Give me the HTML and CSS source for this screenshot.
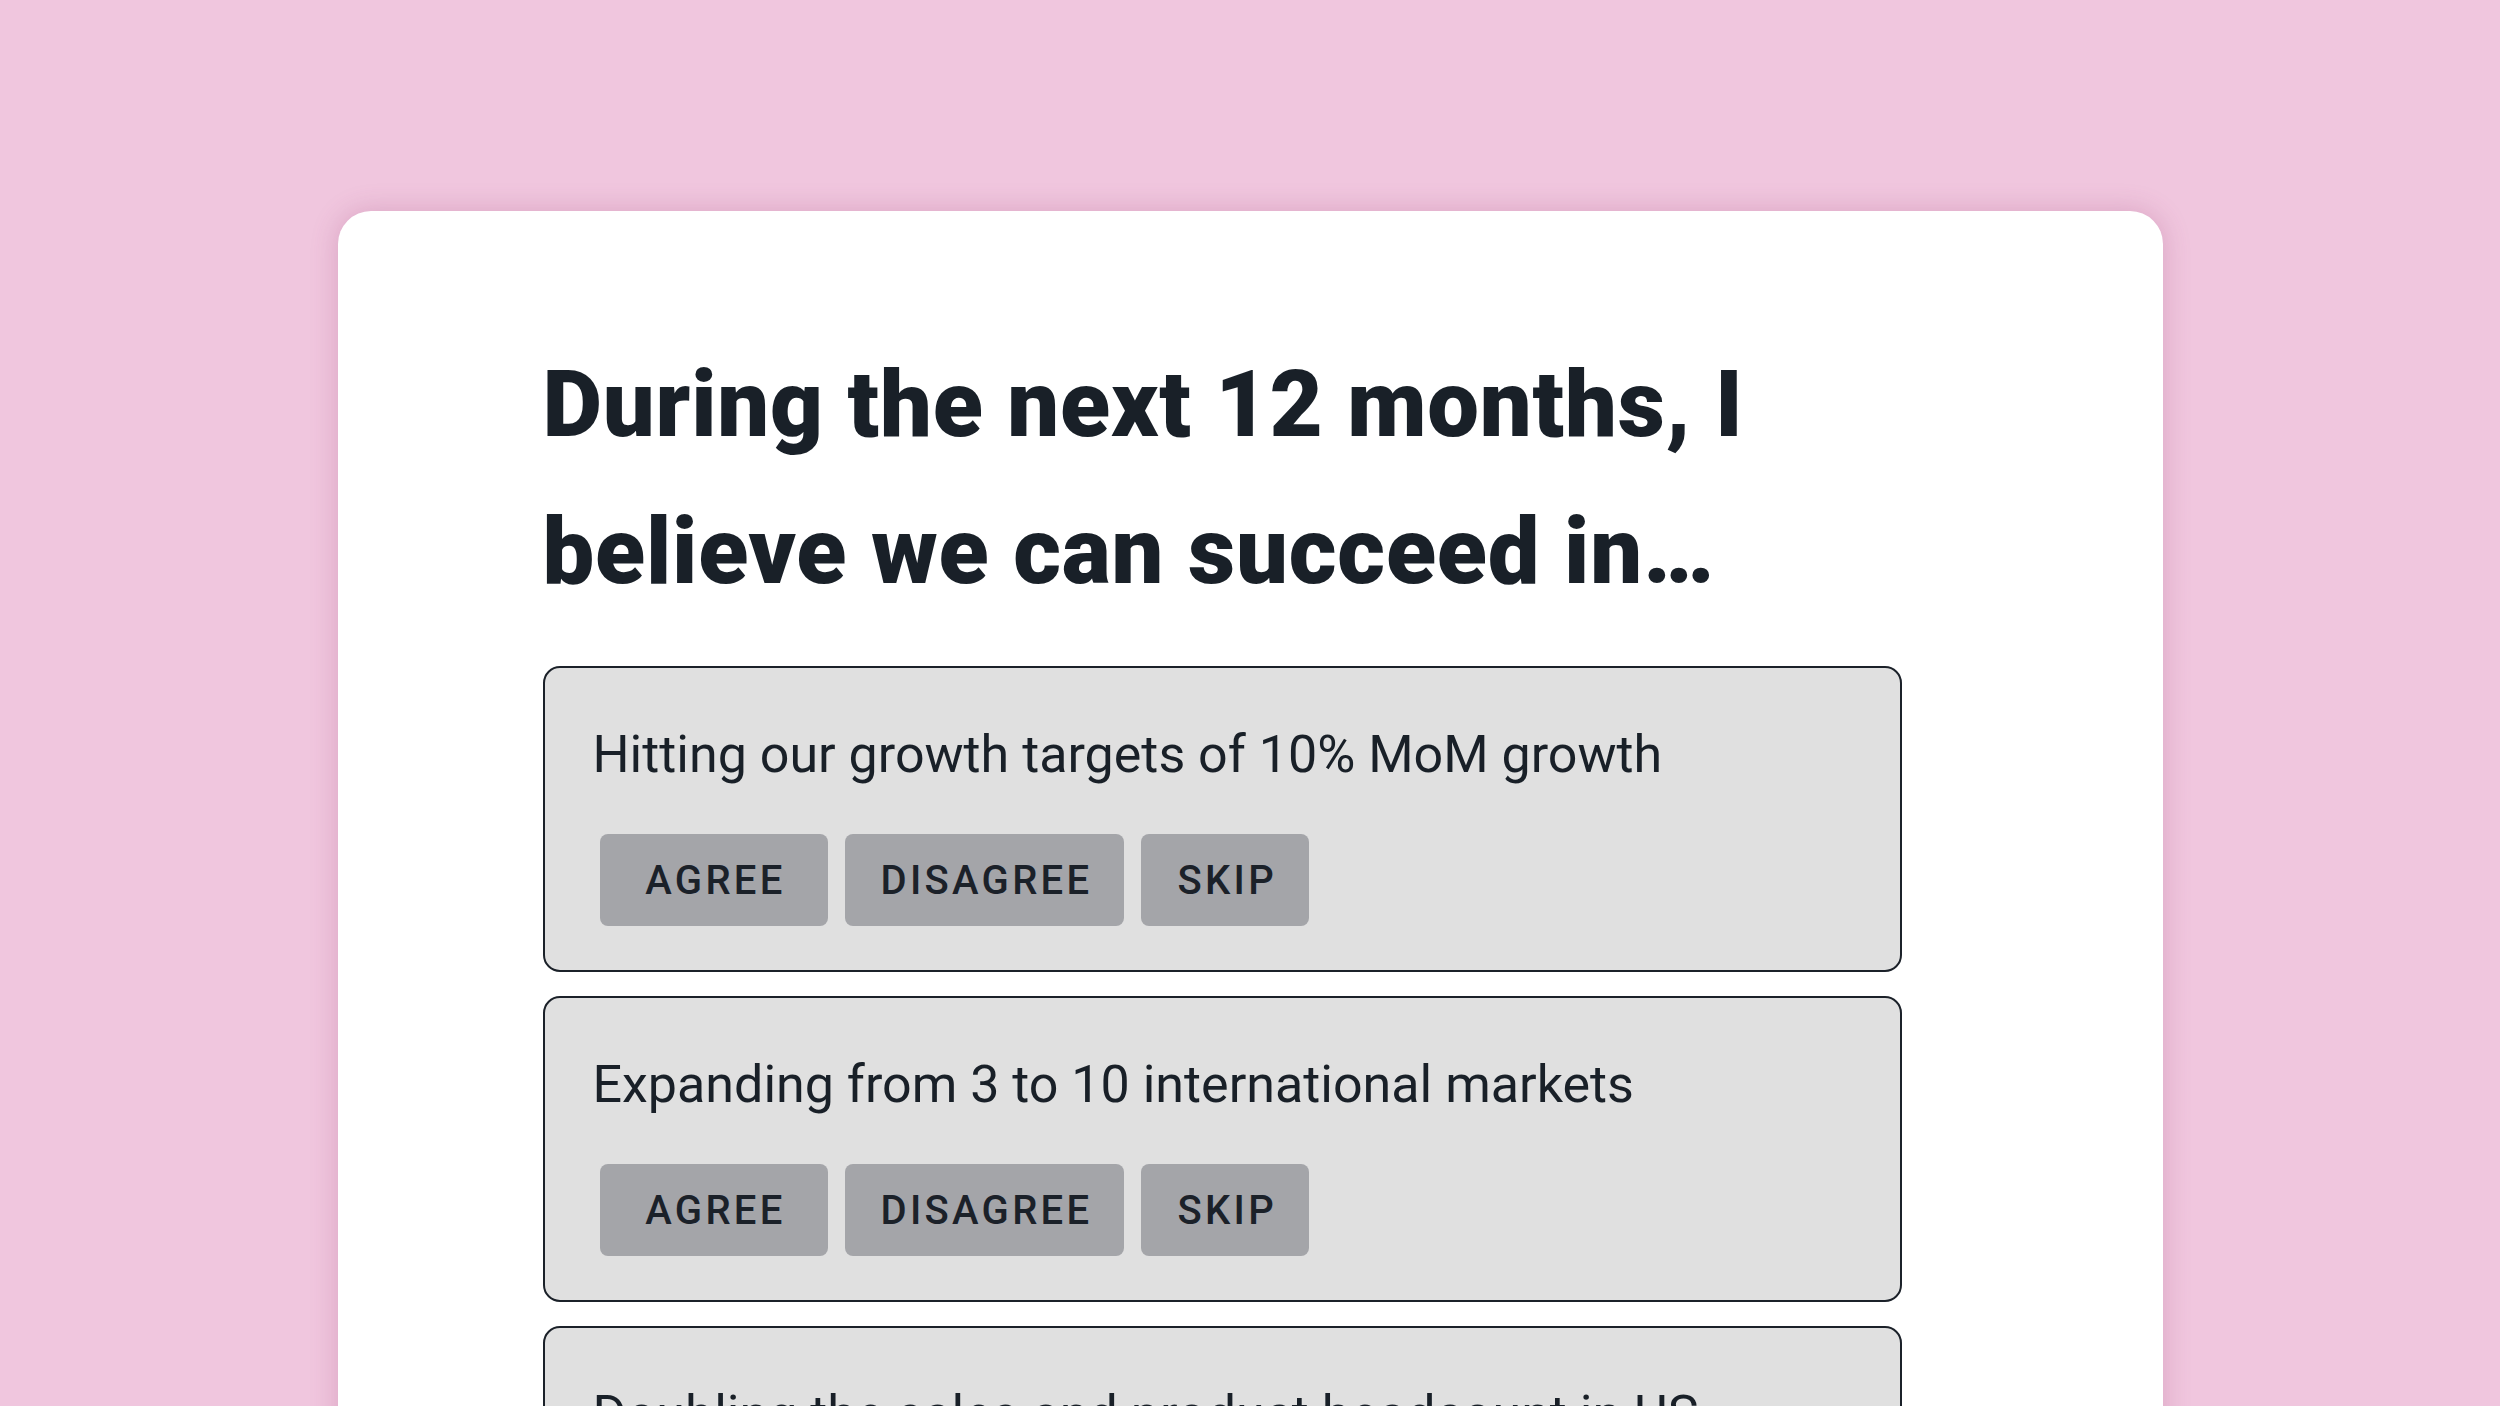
FILE: index.html
```html
<!DOCTYPE html>
<html lang="en">
<head>
<meta charset="utf-8">
<title>Survey</title>
<link rel="stylesheet" href="styles.css">
</head>
<body>
<div class="page">
  <main class="card">
    <div class="content">
      <h1 class="title">During the next 12 months, I believe we can succeed in…</h1>
      <div class="options">
        <section class="option">
          <p class="option-text">Hitting our growth targets of 10% MoM growth</p>
          <div class="actions">
            <button class="btn btn-agree">Agree</button>
            <button class="btn">Disagree</button>
            <button class="btn">Skip</button>
          </div>
        </section>
        <section class="option">
          <p class="option-text">Expanding from 3 to 10 international markets</p>
          <div class="actions">
            <button class="btn btn-agree">Agree</button>
            <button class="btn">Disagree</button>
            <button class="btn">Skip</button>
          </div>
        </section>
        <section class="option">
          <p class="option-text">Doubling the sales and product headcount in US</p>
          <div class="actions">
            <button class="btn btn-agree">Agree</button>
            <button class="btn">Disagree</button>
            <button class="btn">Skip</button>
          </div>
        </section>
      </div>
    </div>
  </main>
</div>
</body>
</html>
```
FILE: styles.css
```css
html, body {
  margin: 0;
  padding: 0;
  height: 100%;
}
body {
  background: #f0c6de;
  font-family: Roboto, "Liberation Sans", sans-serif;
  color: #192028;
  overflow: hidden;
}
.page {
  padding-top: 211px;
  display: flex;
  justify-content: center;
}
.card {
  width: 1825px;
  min-height: 1400px;
  background: #ffffff;
  border-radius: 33px;
  box-shadow: 0 0 26px 2px rgba(150, 60, 110, 0.22);
  box-sizing: border-box;
  padding: 120px 0 0 205px;
}
.content {
  width: 1359px;
}
.title {
  margin: 0 0 41px 0;
  font-size: 92px;
  font-weight: 900;
  line-height: 147px;
  color: #192028;
  letter-spacing: 0.8px;
}
.options {
  display: flex;
  flex-direction: column;
  gap: 24px;
}
.option {
  background: #e0e0e0;
  border: 2px solid #1b2129;
  border-radius: 17px;
  padding: 48px 48px 44px 48px;
}
.option-text {
  margin: 0 0 40px 0;
  font-size: 52px;
  line-height: 78px;
  font-weight: 400;
  color: #192028;
}
.actions {
  display: flex;
  gap: 17px;
  margin-left: 7px;
}
.btn {
  height: 92px;
  padding: 0 32px 0 36px;
  border: none;
  border-radius: 8px;
  background: #a4a5a9;
  color: #1b2129;
  font-family: Roboto, "Liberation Sans", sans-serif;
  font-size: 40px;
  font-weight: 500;
  letter-spacing: 3.3px;
  text-transform: uppercase;
}
.btn-agree {
  min-width: 228px;
}
```
